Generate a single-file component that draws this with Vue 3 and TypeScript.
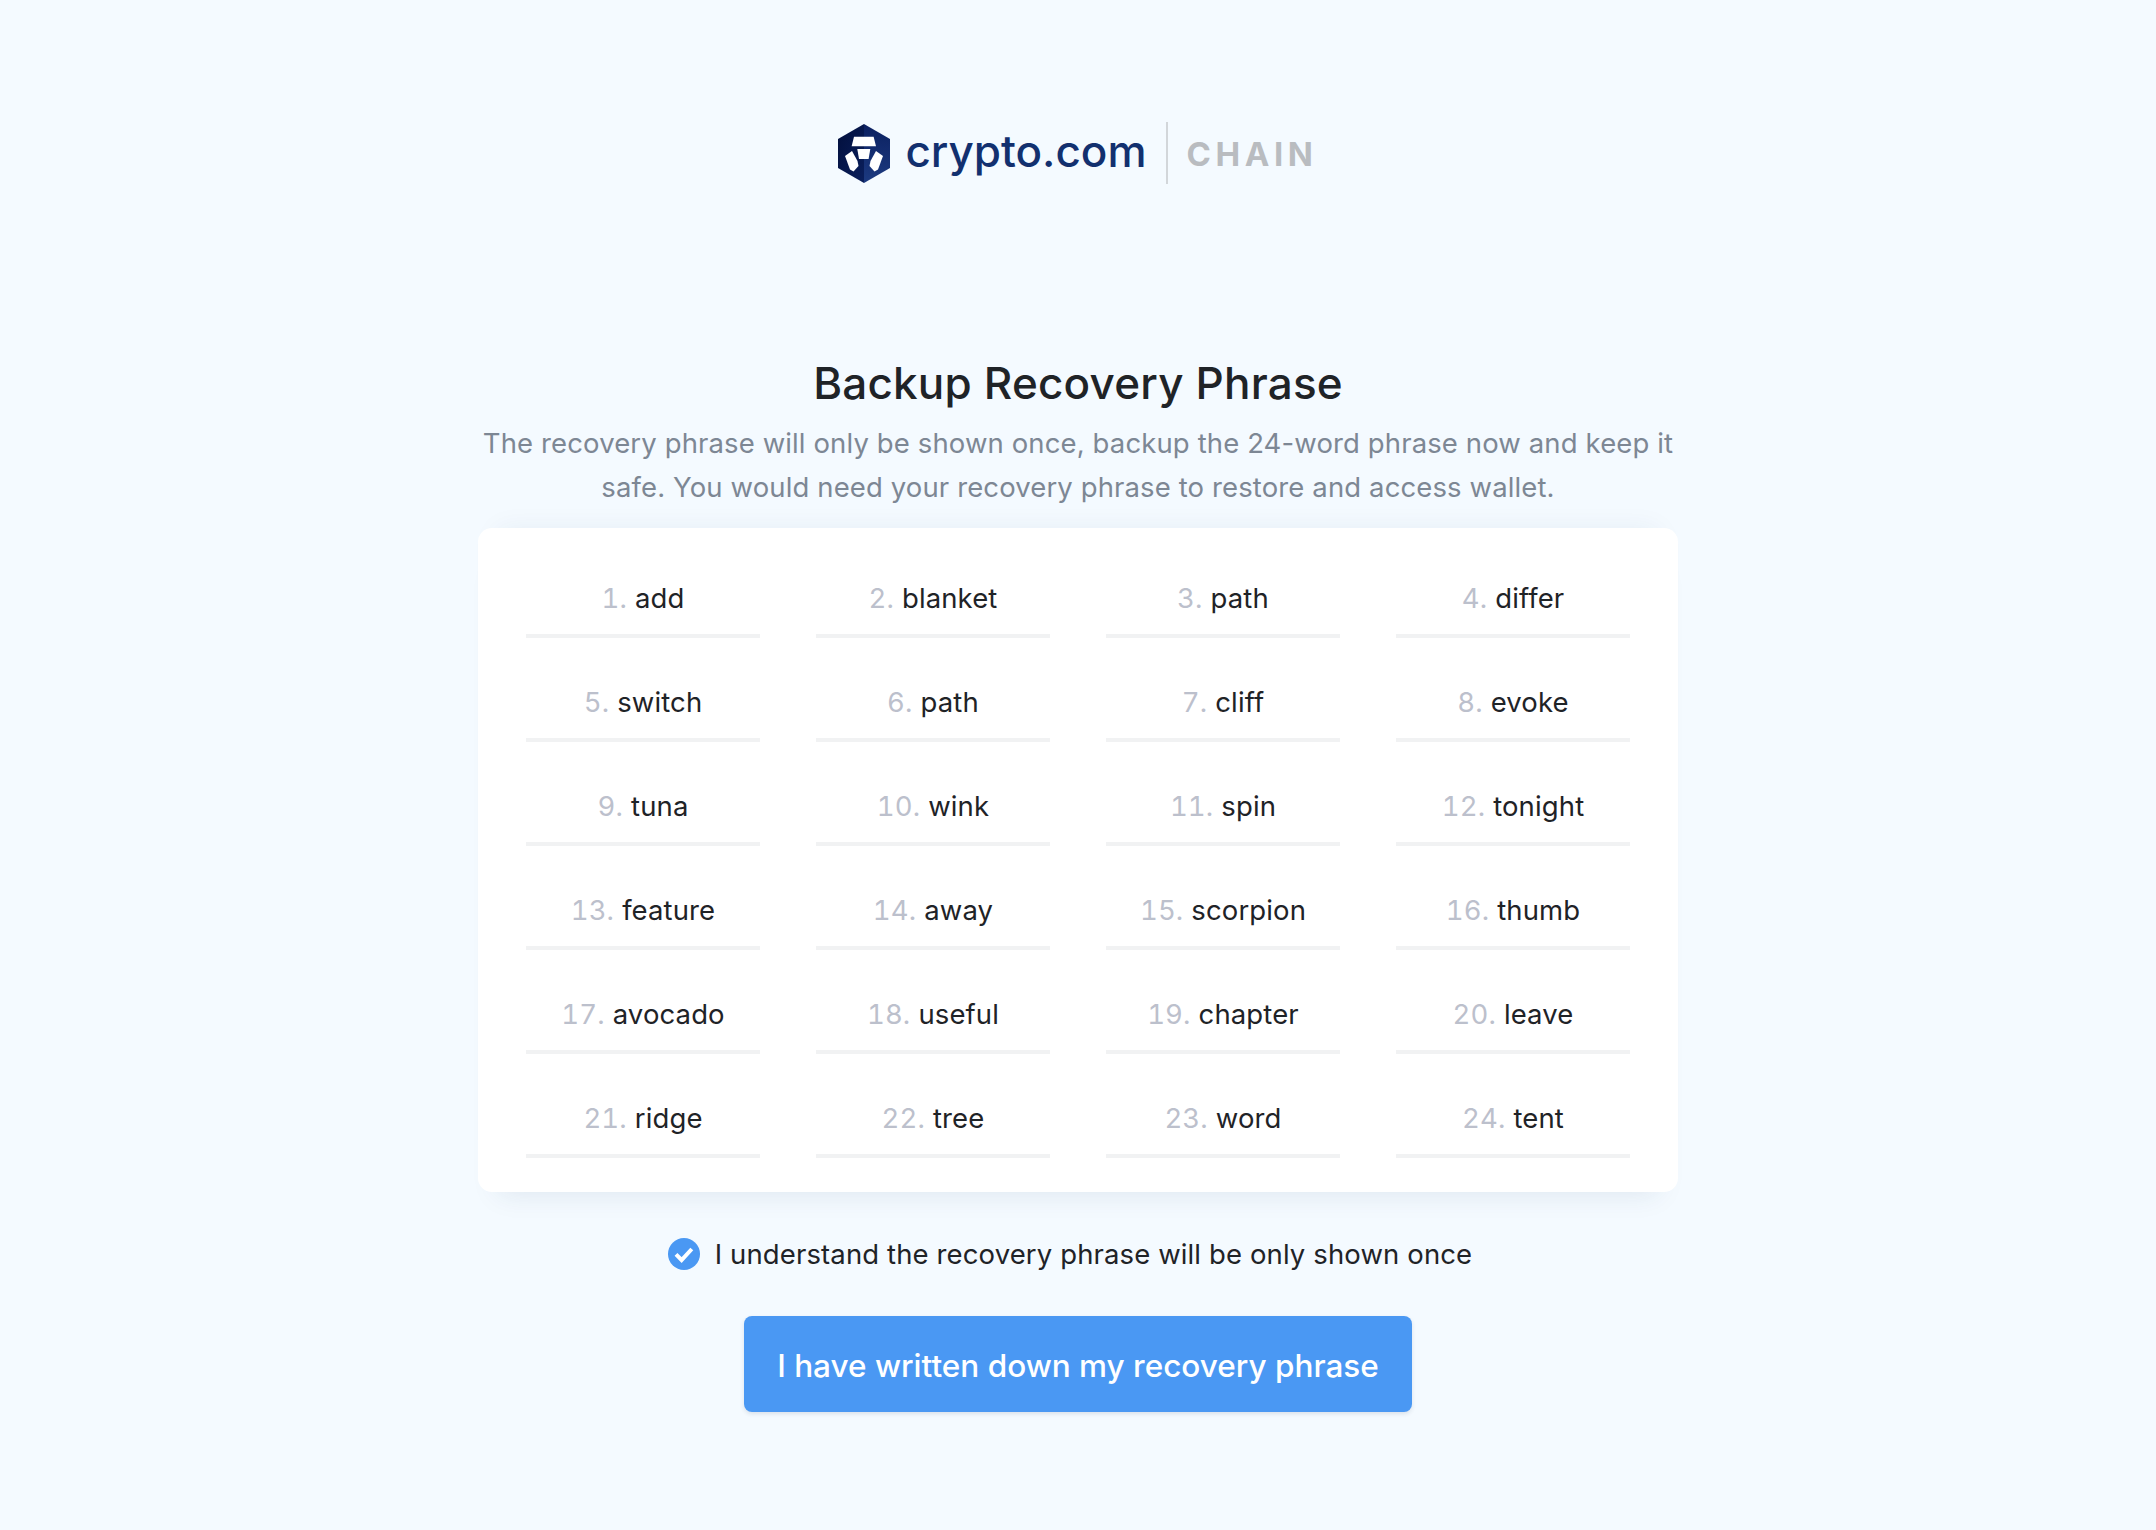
<template>
  <div class="page">
    <header class="brand">
      <svg class="brand-mark" viewBox="0 0 52 59" width="52" height="59">
        <defs>
          <linearGradient id="hexLeft" x1="0" y1="0" x2="1" y2="1">
            <stop offset="0" stop-color="#020f3c" />
            <stop offset="1" stop-color="#0a1f5c" />
          </linearGradient>
          <linearGradient id="hexRight" x1="0" y1="0" x2="0" y2="1">
            <stop offset="0" stop-color="#0b2060" />
            <stop offset="1" stop-color="#1c3a80" />
          </linearGradient>
        </defs>
        <polygon points="26,0 26,59 0,44 0,15" fill="url(#hexLeft)" />
        <polygon points="26,0 52,15 52,44 26,59" fill="url(#hexRight)" />
        <polygon points="16,12.7 35.6,12.7 38,22.3 13.6,22.3" fill="#fff" />
        <polygon points="19.3,25 32.3,25 30.6,35 21,35" fill="#fff" />
        <polygon points="7,32 14,27 19.5,37 20.5,42 15.5,47.5 12,45.5" fill="#fff" />
        <polygon points="45,32 38,27 32.5,37 31.5,42 36.5,47.5 40,45.5" fill="#fff" />
      </svg>
      <span class="brand-name">crypto.com</span>
      <span class="brand-divider"></span>
      <span class="brand-chain">CHAIN</span>
    </header>

    <main class="content">
      <h1 class="title">Backup Recovery Phrase</h1>
      <p class="subtitle">
        The recovery phrase will only be shown once, backup the 24-word phrase now and keep it safe. You would need your recovery phrase to restore and access wallet.
      </p>

      <section class="card">
        <div v-for="(word, index) in words" :key="index" class="word">
          <span class="word-num">{{ index + 1 }}.</span>
          <span class="word-text">{{ word }}</span>
        </div>
      </section>

      <label class="confirm">
        <svg class="confirm-icon" viewBox="0 0 32 32" width="32" height="32">
          <circle cx="16" cy="16" r="16" fill="#4a98f3" />
          <path d="M8 16.4l5.6 5.6 10.2-11" fill="none" stroke="#fff" stroke-width="4" />
        </svg>
        <span>I understand the recovery phrase will be only shown once</span>
      </label>

      <button class="submit" type="button">I have written down my recovery phrase</button>
    </main>
  </div>
</template>

<script setup lang="ts">
const words: string[] = [
  'add', 'blanket', 'path', 'differ',
  'switch', 'path', 'cliff', 'evoke',
  'tuna', 'wink', 'spin', 'tonight',
  'feature', 'away', 'scorpion', 'thumb',
  'avocado', 'useful', 'chapter', 'leave',
  'ridge', 'tree', 'word', 'tent',
]
</script>

<style>
html,
body {
  margin: 0;
  background: #f4faff;
}
</style>

<style scoped>
.page {
  min-height: 1530px;
  box-sizing: border-box;
  padding-top: 122px;
  background: #f4faff;
  font-family: Inter, "Liberation Sans", sans-serif;
  color: #1f2327;
}

.brand {
  display: flex;
  align-items: center;
  justify-content: center;
  height: 62px;
}

.brand-mark {
  margin-right: 15px;
}

.brand-name {
  margin-bottom: 4px;
  font-size: 44px;
  font-weight: 500;
  color: #12306f;
  line-height: 62px;
}

.brand-divider {
  width: 2px;
  height: 62px;
  margin: 0 19px;
  background: #d2d6da;
}

.brand-chain {
  margin-top: 2px;
  font-size: 33px;
  font-weight: 700;
  letter-spacing: 4.6px;
  color: #b9bcc0;
  line-height: 62px;
}

.content {
  display: flex;
  flex-direction: column;
  align-items: center;
  margin-top: 169px;
}

.title {
  margin: 0;
  font-size: 44px;
  font-weight: 500;
  letter-spacing: 0.2px;
  line-height: 60px;
  color: #1f2327;
}

.subtitle {
  width: 1200px;
  margin: 8px 0 0;
  font-size: 27.5px;
  letter-spacing: 0.12px;
  line-height: 44px;
  text-align: center;
  color: #7d8794;
}

.card {
  display: grid;
  grid-template-columns: repeat(4, 234px);
  column-gap: 56px;
  row-gap: 28px;
  width: 1200px;
  box-sizing: border-box;
  margin-top: 19px;
  padding: 34px 48px;
  background: #fff;
  border-radius: 14px;
  box-shadow:
    0 22px 26px -20px rgba(30, 60, 100, 0.1),
    0 -18px 26px -20px rgba(30, 60, 100, 0.07);
}

.word {
  display: flex;
  align-items: center;
  justify-content: center;
  gap: 8px;
  height: 72px;
  border-bottom: 4px solid #f1f2f3;
  font-size: 27.5px;
  letter-spacing: 0.12px;
  font-variant-numeric: tabular-nums;
}

.word-num {
  color: #bcc0cc;
}

.word-text {
  color: #1f2327;
}

.confirm {
  display: flex;
  align-items: center;
  gap: 15px;
  margin-top: 46px;
  padding-right: 16px;
  height: 32px;
  font-size: 27.5px;
  letter-spacing: 0.12px;
  color: #1f2327;
}

.submit {
  width: 668px;
  height: 96px;
  margin-top: 46px;
  padding: 3px 0 0;
  border: none;
  border-radius: 8px;
  background: #4a98f3;
  box-shadow: 0 2px 4px rgba(30, 50, 80, 0.12);
  color: #fff;
  font-family: inherit;
  font-size: 31.5px;
  font-weight: 500;
}
</style>
